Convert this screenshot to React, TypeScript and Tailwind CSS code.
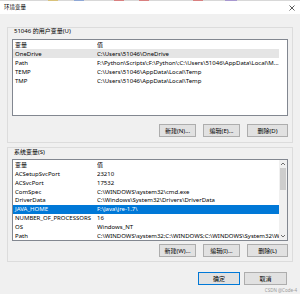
import React from "react";

const FONT = '"Noto Sans", "Noto Sans CJK SC", sans-serif';

type BtnProps = { label: string; w: string; primary?: boolean };
function Btn({ label, w, primary }: BtnProps) {
  return (
    <div
      className={`${w} h-[13px] flex items-center justify-center bg-[#e1e1e1] border ${
        primary ? "border-[#0078d7]" : "border-[#adadad]"
      } text-[6px] leading-none text-black whitespace-nowrap`}
    >
      {label}
    </div>
  );
}

type RowProps = { name: string; value: string; sel?: "gray" | "blue"; h?: string };
function Row({ name, value, sel, h }: RowProps) {
  const bg = sel === "gray" ? "bg-[#e5e5e5]" : sel === "blue" ? "bg-[#0078d7]" : "";
  const fg = sel === "blue" ? "text-white" : "text-black";
  return (
    <div className={`${h ?? "h-[9px]"} w-[266px] flex items-center ${bg} ${fg} text-[6px] leading-none whitespace-nowrap overflow-hidden`}>
      <div className="w-[84px] pl-[2px] shrink-0 overflow-hidden">{name}</div>
      <div className="flex-1 overflow-hidden">{value}</div>
    </div>
  );
}

function Chevron({ up }: { up?: boolean }) {
  return (
    <svg width="6" height="4" viewBox="0 0 6 4" className="block">
      <path d={up ? "M1 3 L3 1 L5 3" : "M1 1 L3 3 L5 1"} stroke="#606060" strokeWidth="0.9" fill="none" />
    </svg>
  );
}

export default function App() {
  const topSegs = [
    "bg-[#d8d8d8] w-[48px]",
    "bg-[#d9c27a] w-[10px]",
    "bg-[#d8d8d8] w-[16px]",
    "bg-[#8fa8d6] w-[10px]",
    "bg-[#d8d8d8] w-[30px]",
    "bg-[#d98080] w-[10px]",
    "bg-[#d8d8d8] w-[15px]",
    "bg-[#d98080] w-[10px]",
    "bg-[#d8d8d8] w-[44px]",
    "bg-[#d98080] w-[10px]",
    "bg-[#d8d8d8] w-[22px]",
    "bg-[#a898d0] w-[12px]",
    "bg-[#d8d8d8] w-[63px]",
  ];
  return (
    <div className="w-[300px] h-[294px] bg-[#f0f0f0] flex flex-col overflow-hidden relative" style={{ fontFamily: FONT }}>
      <div className="h-[1px] flex">
        {topSegs.map((c, i) => (
          <div key={i} className={`h-[1px] ${c}`} />
        ))}
      </div>
      <div className="h-[13px] bg-white flex items-center justify-between pl-[4px] pr-[5px]">
        <span className="text-[5.5px] leading-none text-black">环境变量</span>
        <svg width="6" height="6" viewBox="0 0 6 6" className="block">
          <path d="M0.5 0.5 L5.5 5.5 M5.5 0.5 L0.5 5.5" stroke="#333" strokeWidth="0.8" />
        </svg>
      </div>

      <div className="px-[7px] pt-[13px] flex flex-col">
        {/* user group */}
        <div className="border border-[#dcdcdc] px-[4px] pb-[5px] flex flex-col">
          <div className="mt-[-1px] pl-[2px] h-[8px] leading-[8px] text-[6px] text-black whitespace-nowrap">51046 的用户变量(U)</div>
          <div className="mt-[4px] h-[77px] bg-white border border-[#828790] flex flex-col overflow-hidden">
            <Row name="变量" value="值" />
            <Row name="OneDrive" value="C:\Users\51046\OneDrive" sel="gray" />
            <Row name="Path" value="F:\Python\Scripts\;F:\Python\;C:\Users\51046\AppData\Local\M..." />
            <Row name="TEMP" value="C:\Users\51046\AppData\Local\Temp" />
            <Row name="TMP" value="C:\Users\51046\AppData\Local\Temp" />
          </div>
          <div className="mt-[8px] flex justify-end gap-[7px] pr-[0px]">
            <Btn label="新建(N)..." w="w-[37px]" />
            <Btn label="编辑(E)..." w="w-[37px]" />
            <Btn label="删除(D)" w="w-[41px]" />
          </div>
        </div>

        {/* system group */}
        <div className="mt-[4px] border border-[#dcdcdc] px-[4px] pb-[4px] flex flex-col">
          <div className="pl-[2px] h-[8px] leading-[8px] text-[6px] text-black whitespace-nowrap">系统变量(S)</div>
          <div className="mt-[3px] h-[82px] bg-white border border-[#828790] flex overflow-hidden">
            <div className="flex-1 flex flex-col overflow-hidden">
              <Row name="变量" value="值" h="h-[10px]" />
              <Row name="ACSetupSvcPort" value="23210" />
              <Row name="ACSvcPort" value="17532" />
              <Row name="ComSpec" value="C:\WINDOWS\system32\cmd.exe" />
              <Row name="DriverData" value="C:\Windows\System32\Drivers\DriverData" />
              <Row name="JAVA_HOME" value="F:\Java\jre-1.7\" sel="blue" />
              <Row name="NUMBER_OF_PROCESSORS" value="16" />
              <Row name="OS" value="Windows_NT" />
              <Row name="Path" value="C:\WINDOWS\system32;C:\WINDOWS;C:\WINDOWS\System32\Wbem;..." />
            </div>
            <div className="w-[8px] bg-[#f0f0f0] flex flex-col items-center">
              <div className="h-[8px] flex items-center justify-center">
                <Chevron up />
              </div>
              <div className="w-[6px] h-[22px] bg-[#cdcdcd]" />
              <div className="flex-1" />
              <div className="h-[8px] flex items-center justify-center">
                <Chevron />
              </div>
            </div>
          </div>
          <div className="mt-[3px] flex justify-end gap-[7px]">
            <Btn label="新建(W)..." w="w-[37px]" />
            <Btn label="编辑(I)..." w="w-[37px]" />
            <Btn label="删除(L)" w="w-[41px]" />
          </div>
        </div>

        <div className="mt-[10px] flex justify-end gap-[4px] pr-[6px]">
          <Btn label="确定" w="w-[42px]" primary />
          <Btn label="取消" w="w-[43px]" />
        </div>
      </div>

      <div className="absolute right-[3px] bottom-[2px] text-[4.5px] leading-none text-[#9a9a9a] whitespace-nowrap">CSDN @Code-4</div>
    </div>
  );
}
